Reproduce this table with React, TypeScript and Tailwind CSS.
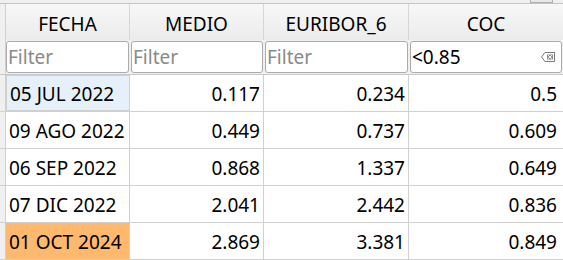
import React from "react";

const font = { fontFamily: '"Noto Sans", "Open Sans", sans-serif' };

const rows = [
  { d: "05 JUL 2022", m: "0.117", e: "0.234", c: "0.5", hl: "blue" },
  { d: "09 AGO 2022", m: "0.449", e: "0.737", c: "0.609", hl: "" },
  { d: "06 SEP 2022", m: "0.868", e: "1.337", c: "0.649", hl: "" },
  { d: "07 DIC 2022", m: "2.041", e: "2.442", c: "0.836", hl: "" },
  { d: "01 OCT 2024", m: "2.869", e: "3.381", c: "0.849", hl: "orange" },
];

function ClearIcon() {
  return (
    <svg width="14" height="10" viewBox="0 0 14 10">
      <path d="M4 0.5 H13.5 V9.5 H4 L0.5 5 Z" fill="none" stroke="#777" strokeWidth="1" />
      <rect x="6" y="2.5" width="6" height="5" fill="#888" />
      <path d="M7 3.2 L11 6.8 M11 3.2 L7 6.8" stroke="#fff" strokeWidth="1" />
    </svg>
  );
}

export default function App() {
  return (
    <div className="w-[563px] h-[260px] overflow-hidden bg-white text-[19px] leading-none text-black" style={font}>
      <div className="h-[4px] bg-[#f0f0f0] border-b border-[#c4c4c4] relative">
        <div className="absolute left-[530px] top-0 w-[23px] h-[3px] border-x border-b border-[#b0b0b0] bg-[#e8e8e8]" />
      </div>
      {/* header */}
      <div className="flex h-[36px] bg-gradient-to-b from-[#f8f8f8] to-[#ebebeb]">
        <div className="w-[6px] border-r border-[#cfcfcf] bg-[#f0f0f0]" />
        <div className="w-[124px] border-r border-[#d6d6d6] flex items-center justify-center pt-[4px]">FECHA</div>
        <div className="w-[134px] border-r border-[#d6d6d6] flex items-center justify-center pt-[4px]">MEDIO</div>
        <div className="w-[145px] border-r border-[#d6d6d6] flex items-center justify-center pt-[4px]">EURIBOR_6</div>
        <div className="flex-1 flex items-center justify-center pt-[4px]">COC</div>
      </div>
      {/* filter row */}
      <div className="flex h-[35px] bg-[#f0f0f0] border-b border-[#c8c8c8]">
        <div className="w-[6px] border-r border-[#cfcfcf]" />
        <div className="w-[124px] pt-[1px] pb-[1px] pr-[1px]">
          <div className="h-full bg-white border border-[#ababab] rounded-[3px] flex items-center pl-[1px] text-[#8a8a8a]">Filter</div>
        </div>
        <div className="w-[134px] pt-[1px] pb-[1px] pl-[1px] pr-[1px]">
          <div className="h-full bg-white border border-[#ababab] rounded-[3px] flex items-center pl-[1px] text-[#8a8a8a]">Filter</div>
        </div>
        <div className="w-[145px] pt-[1px] pb-[1px] pl-[1px] pr-[1px]">
          <div className="h-full bg-white border border-[#ababab] rounded-[3px] flex items-center pl-[1px] text-[#8a8a8a]">Filter</div>
        </div>
        <div className="flex-1 pt-[1px] pb-[1px] pl-[1px] pr-[1px]">
          <div className="h-full bg-white border border-[#ababab] rounded-[3px] flex items-center pl-[1px] pr-[6px] justify-between">
            <span>&lt;0.85</span>
            <ClearIcon />
          </div>
        </div>
      </div>
      {/* data */}
      {rows.map((r, i) => (
        <div key={i} className="flex h-[37px] border-b border-[#d0d0d0]">
          <div className="w-[6px] border-r border-[#cfcfcf] bg-[#f0f0f0]" />
          <div
            className={
              "w-[124px] border-r border-[#d0d0d0] flex items-center pl-[3px] pt-[3px] " +
              (r.hl === "blue"
                ? "bg-[#e6f0f9] border border-[#a8c6df]"
                : r.hl === "orange"
                ? "bg-[#ffb96e]"
                : "")
            }
          >
            {r.d}
          </div>
          <div className="w-[134px] border-r border-[#d0d0d0] flex items-center justify-end pr-[3px] pt-[3px]">{r.m}</div>
          <div className="w-[145px] border-r border-[#d0d0d0] flex items-center justify-end pr-[3px] pt-[3px]">{r.e}</div>
          <div className="flex-1 flex items-center justify-end pr-[6px] pt-[3px]">{r.c}</div>
        </div>
      ))}
    </div>
  );
}
